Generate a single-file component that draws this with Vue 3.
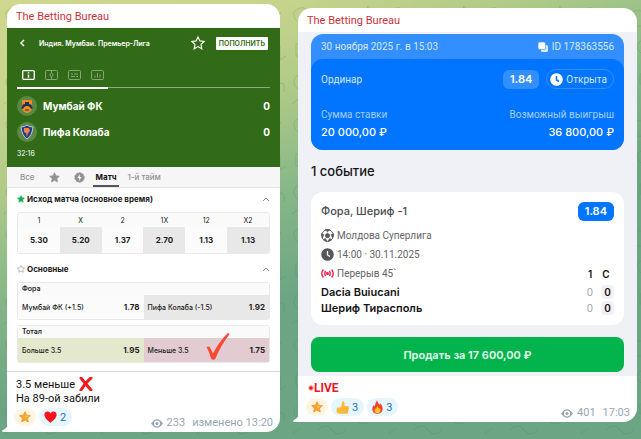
<script setup>
import { ref } from "vue";

const teams = [
  { name: "Мумбай ФК", score: 0, crest: "shield" },
  { name: "Пифа Колаба", score: 0, crest: "lion" }
];

const outcomes = [
  { label: "1", odd: "5.30" },
  { label: "X", odd: "5.20" },
  { label: "2", odd: "1.37" },
  { label: "1X", odd: "2.70" },
  { label: "12", odd: "1.13" },
  { label: "X2", odd: "1.13" }
];

const markets = [
  {
    title: "Фора",
    picks: [
      { label: "Мумбай ФК (+1.5)", odd: "1.78", tone: "light" },
      { label: "Пифа Колаба (-1.5)", odd: "1.92", tone: "grey" }
    ]
  },
  {
    title: "Тотал",
    picks: [
      { label: "Больше 3.5", odd: "1.95", tone: "lime" },
      { label: "Меньше 3.5", odd: "1.75", tone: "pink", checked: true }
    ]
  }
];

const scoreRows = [
  { name: "Dacia Buiucani", first: 0, total: 0 },
  { name: "Шериф Тирасполь", first: 0, total: 0 }
];

const activeTab = ref("match");
const starPath = "M8 1l2.1 4.6 5 .6-3.7 3.4 1 5L8 12.1l-4.4 2.5 1-5L.9 6.2l5-.6z";
</script>

<template>
  <main class="chat">
    <svg class="chat__doodles" aria-hidden="true">
      <defs>
        <pattern id="doodles" width="96" height="110" patternUnits="userSpaceOnUse">
          <g fill="none" stroke="#3f7f55" stroke-width="1">
            <path d="M6 12c8-9 18-2 13 6s-14 4-13-6zM30 8l12 5-9 8zM52 18c4-10 16-10 18 0s-12 12-18 0zM80 6l3 6 6 1-5 4 2 6-6-3-6 3 2-6-4-4 6-1z" />
            <path d="M8 44h14v12H8zM11 44v-4h8v4M36 38c8 2 8 14 0 16M44 36c10 4 10 20 0 22M66 40q6-6 12 0t-12 14q-10-8 0-14zM88 46v14l6-4" />
            <circle cx="14" cy="82" r="8" />
            <path d="M10 80h1M17 80h1M10 85q4 3 8 0M36 76l14 12M50 76l-8 14M64 74h16v10H64zM68 90q6 8 14 0M86 84q8-4 6 8M30 100q8-8 14 0t14 0M4 104l8-6" />
          </g>
        </pattern>
      </defs>
      <rect width="100%" height="100%" fill="url(#doodles)" />
    </svg>

    <article class="bubble">
      <h2 class="bubble__author">The Betting Bureau</h2>

      <section class="match">
        <div class="match__nav">
          <button class="plain" aria-label="Назад">
            <svg width="6" height="8" viewBox="0 0 6 8"><path d="M5 1L2 4l3 3" fill="none" stroke="#fff" stroke-width="1.5" /></svg>
          </button>
          <h3 class="match__league">Индия. Мумбаи. Премьер-Лига</h3>
          <button class="plain" aria-label="В избранное">
            <svg width="14" height="14" viewBox="0 0 16 16"><path :d="starPath" fill="none" stroke="#fff" stroke-width="1.3" /></svg>
          </button>
          <button class="match__deposit">ПОПОЛНИТЬ</button>
        </div>

        <div class="match__views">
          <button class="plain" aria-label="Инфо">
            <svg width="13" height="10" viewBox="0 0 13 10" fill="none" stroke="#fff"><rect x=".7" y=".7" width="11.6" height="8.6" rx="1" stroke-width="1.3" /><path d="M6.5 2.2v1.3M6.5 4.5v3.3" stroke-width="1.5" /></svg>
          </button>
          <button class="plain dim" aria-label="Поле">
            <svg width="13" height="10" viewBox="0 0 13 10" fill="none" stroke="#fff"><rect x=".5" y=".5" width="12" height="9" rx="1" /><circle cx="6.5" cy="5" r="1.5" /><path d="M6.5 1v2M6.5 7v2" /></svg>
          </button>
          <button class="plain dim" aria-label="События">
            <svg width="13" height="10" viewBox="0 0 13 10" fill="none" stroke="#fff"><rect x=".5" y=".5" width="12" height="9" rx="1" /><path d="M3 4h2M6 4h4M3 6.5h4M8 6.5h2" /></svg>
          </button>
          <button class="plain dim" aria-label="Статистика">
            <svg width="13" height="10" viewBox="0 0 13 10" fill="none" stroke="#fff"><rect x=".5" y=".5" width="12" height="9" rx="1" /><path d="M4 5.5v2M6.5 3v4.5M9 4.5v3" /></svg>
          </button>
        </div>
        <div class="match__bar"><span></span></div>

        <div v-for="team in teams" :key="team.name" class="team">
          <svg width="20" height="20" viewBox="0 0 20 20">
            <circle cx="10" cy="10" r="10" fill="#5b8845" />
            <g v-if="team.crest === 'shield'">
              <path d="M5 4h10v9q-1 3-5 4-4-1-5-4z" fill="#f18b20" />
              <path d="M5 11q0-3 3-3V6h4v2q3 0 3 3l1 1-2 1q-1-3-4-3t-4 3l-2-1z" fill="#1b315f" />
              <path d="M8 13h4v2H8z" fill="#8a6236" />
            </g>
            <g v-else>
              <path d="M4 5q4 0 6-2 2 2 6 2-1 9-6 12Q5 14 4 5z" fill="#253b83" stroke="#c2c9d9" />
              <path d="M7 6h5l1 3-2 2-1 4-1-4-2-1z" fill="#ed8350" />
            </g>
          </svg>
          <strong>{{ team.name }}</strong>
          <strong class="team__score">{{ team.score }}</strong>
        </div>
        <time class="match__time">32:16</time>
      </section>

      <nav class="tabs">
        <button class="tab" :class="{ 'tab--on': activeTab === 'all' }" @click="activeTab = 'all'">Все</button>
        <button class="tab" aria-label="Избранное">
          <svg width="11" height="11" viewBox="0 0 16 16"><path :d="starPath" fill="#929292" stroke="#929292" /></svg>
        </button>
        <button class="tab" aria-label="Быстрые">
          <svg width="11" height="11" viewBox="0 0 11 11"><circle cx="5.5" cy="5.5" r="4.7" fill="#929292" stroke="#929292" stroke-dasharray="2 1" /><path d="M6 2L3.5 6h1.8L5 9l2.5-4H5.7z" fill="#fff" /></svg>
        </button>
        <button class="tab" :class="{ 'tab--on': activeTab === 'match' }" @click="activeTab = 'match'">Матч</button>
        <button class="tab" :class="{ 'tab--on': activeTab === 'half' }" @click="activeTab = 'half'">1-й тайм</button>
      </nav>

      <section class="odds">
        <h4 class="odds__title">
          <svg width="8" height="8" viewBox="0 0 16 16"><path :d="starPath" fill="#0bb34c" stroke="#0bb34c" /></svg>
          Исход матча (основное время)
          <svg class="odds__arrow" width="8" height="5" viewBox="0 0 8 5"><path d="M1 4l3-3 3 3" fill="none" stroke="#8c8c8c" /></svg>
        </h4>
        <table class="outcomes">
          <thead>
            <tr><th v-for="item in outcomes" :key="item.label">{{ item.label }}</th></tr>
          </thead>
          <tbody>
            <tr><td v-for="item in outcomes" :key="item.label">{{ item.odd }}</td></tr>
          </tbody>
        </table>

        <h4 class="odds__title">
          <svg width="8" height="8" viewBox="0 0 16 16"><path :d="starPath" fill="none" stroke="#a5a5a5" stroke-width="1.5" /></svg>
          Основные
          <svg class="odds__arrow" width="8" height="5" viewBox="0 0 8 5"><path d="M1 4l3-3 3 3" fill="none" stroke="#8c8c8c" /></svg>
        </h4>
        <div v-for="market in markets" :key="market.title" class="market">
          <h5 class="market__title">{{ market.title }}</h5>
          <div class="market__row">
            <button v-for="pick in market.picks" :key="pick.label" class="pick" :class="`pick--${pick.tone}`">
              <span>{{ pick.label }}</span>
              <b>{{ pick.odd }}</b>
              <svg v-if="pick.checked" class="pick__check" width="26" height="29" viewBox="0 0 26 29"><path d="M1.500 15l3-.5L8 21.500Q14 10 23 .8l1.500 1.400Q16 13 10.500 26.500q-2 2.500-4.500 0Q4.500 20 1.500 15z" fill="#fb4934" /></svg>
            </button>
          </div>
        </div>
      </section>

      <footer class="caption caption--line">
        <p class="caption__text">
          3.5 меньше
          <svg width="14" height="14" viewBox="0 0 14 14"><path d="M2 1q3 4 10 12M12 1Q7 5 2 13" fill="none" stroke="#f11b22" stroke-width="3" stroke-linecap="round" /></svg>
        </p>
        <p class="caption__text">На 89-ой забили</p>
        <div class="caption__row">
          <button class="react react--star" aria-label="Звезда">
            <svg width="12" height="12" viewBox="0 0 16 16"><path :d="starPath" fill="#f9a72b" stroke="#f08c23" /><path d="M8 3l1 4 4 0-4 2z" fill="#ffd95c" /></svg>
          </button>
          <button class="react">
            <svg width="13" height="12" viewBox="0 0 13 12"><path d="M6.5 11.8C4 9.5.4 7 .4 3.7.4.4 4.6-.8 6.5 2.3 8.4-.8 12.6.4 12.6 3.7c0 3.3-3.6 5.8-6.1 8.1z" fill="#f5141c" /></svg>
            2
          </button>
          <div class="meta">
            <svg width="12" height="9" viewBox="0 0 12 9"><path d="M0 4.5Q6-4 12 4.5 6 13 0 4.5z" fill="#98a4ae" /><circle cx="6" cy="4.5" r="2.3" fill="#98a4ae" stroke="#fff" stroke-width="1.4" /></svg>
            <span>233</span>
            <span class="meta__time">изменено 13:20</span>
          </div>
        </div>
      </footer>
      <svg class="bubble__tail" width="6" height="8" viewBox="0 0 6 8"><path d="M6 0v8H1q-2-1 0-2 4-2 5-6z" fill="#fff" /></svg>
    </article>

    <article class="bubble bubble--second">
      <h2 class="bubble__author">The Betting Bureau</h2>

      <section class="slip">
        <div class="ticket">
          <div class="ticket__top">
            <span>30 ноября 2025 г. в 15:03</span>
            <span class="ticket__id">
              <svg width="10" height="10" viewBox="0 0 10 10"><rect x="3" y="3" width="7" height="7" rx="1.5" fill="#d9eaff" /><rect x="0" y="0" width="7.5" height="7.5" rx="1.5" fill="#fff" stroke="#338fff" stroke-width=".6" /></svg>
              ID 178363556
            </span>
          </div>
          <div class="ticket__body">
            <div class="ticket__line">
              <span class="ticket__kind">Ординар</span>
              <span class="odd odd--pale">1.84</span>
              <span class="status">
                <svg width="13" height="13" viewBox="0 0 13 13"><circle cx="6.5" cy="6.5" r="6.3" fill="#fff" /><path d="M6.5 3v4l2.5 1.5" fill="none" stroke="#0175ff" stroke-width="1.5" /></svg>
                Открыта
              </span>
            </div>
            <dl class="sums">
              <div><dt>Сумма ставки</dt><dd>20 000,00 ₽</dd></div>
              <div><dt>Возможный выигрыш</dt><dd>36 800,00 ₽</dd></div>
            </dl>
          </div>
        </div>

        <h3 class="slip__title">1 событие</h3>

        <div class="event">
          <div class="event__head">
            <h4>Фора, Шериф -1</h4>
            <span class="odd">1.84</span>
          </div>
          <p class="event__info">
            <svg width="13" height="13" viewBox="0 0 13 13"><circle cx="6.5" cy="6.5" r="5.8" fill="#fff" stroke="#57575b" /><path d="M6.5 4.2l2.2 1.6-.8 2.600H5.100l-.8-2.600zM4.200.7h4.600L6.500 2.700zM.4 4.800l2.300.8L1.500 8.800zM12.600 4.800l-2.300.8 1.200 3.200zM2.500 10.800l1.800-1.300 1.500 3zM10.500 10.800L8.700 9.500l-1.500 3z" fill="#57575b" stroke="#57575b" stroke-width=".8" /></svg>
            Молдова Суперлига
          </p>
          <p class="event__info">
            <svg width="13" height="13" viewBox="0 0 13 13"><circle cx="6.5" cy="6.5" r="6.3" fill="#57575b" /><path d="M6.5 3v4l2.5 1.5" fill="none" stroke="#fff" stroke-width="1.3" /></svg>
            14:00 · 30.11.2025
          </p>
          <table class="scores">
            <thead>
              <tr>
                <th class="scores__state">
                  <span class="event__info">
                    <svg width="13" height="9" viewBox="0 0 13 9" fill="none" stroke="#ec2450" stroke-width="1.4"><path d="M2.3.5q-3 4 0 8M4.6 2q-1.600 2.5 0 5M10.7.5q3 4 0 8M8.4 2q1.6 2.5 0 5" /><circle cx="6.5" cy="4.5" r=".9" fill="#ec2450" /></svg>
                    Перерыв 45`
                  </span>
                </th>
                <th>1</th>
                <th>С</th>
              </tr>
            </thead>
            <tbody>
              <tr v-for="row in scoreRows" :key="row.name">
                <th class="scores__name" scope="row">{{ row.name }}</th>
                <td class="scores__first">{{ row.first }}</td>
                <td><span class="scores__total">{{ row.total }}</span></td>
              </tr>
            </tbody>
          </table>
        </div>

        <button class="sell">Продать за 17 600,00 ₽</button>
      </section>

      <footer class="caption">
        <p class="live">
          <svg width="6" height="6" viewBox="0 0 6 6"><circle cx="3" cy="3" r="2.9" fill="#fbb" /><circle cx="3" cy="3" r="1.8" fill="#f0141e" /></svg>
          LIVE
        </p>
        <div class="caption__row">
          <button class="react react--star" aria-label="Звезда">
            <svg width="12" height="12" viewBox="0 0 16 16"><path :d="starPath" fill="#f9a72b" stroke="#f08c23" /><path d="M8 3l1 4 4 0-4 2z" fill="#ffd95c" /></svg>
          </button>
          <button class="react">
            <svg width="13" height="13" viewBox="0 0 13 13"><path d="M1 6.5h3Q6 5 6 1.5 6 .3 7 .3q2 0 1.5 4.7H12q1 .2.8 1.5L12 11.5q-.3 1.3-1.5 1.3H4q-2.5 0-3.3-1.5Q.2 9 1 6.5z" fill="#fdbb3c" /><path d="M9.5 7.2h3M9.3 9.2h3M9 11.1h2.7" stroke="#ef9c2c" stroke-width=".6" /></svg>
            3
          </button>
          <button class="react">
            <svg width="11" height="14" viewBox="0 0 11 14"><path d="M5 .3Q5.5 3 8 5q.5-1 .3-2Q11 6 10.7 9q-.3 4.7-5.2 4.7T.3 9.2Q.2 6.5 2 5q.2 1 .8 1.5Q3 3 5 .3z" fill="#f4432c" /><path d="M5.7 6Q6 8 7.3 8.8l.6-1q2 5.4-2.4 5.5-4.4-.3-2.4-5 .5 1 1 1Q4.3 7.5 5.7 6z" fill="#ffc928" /></svg>
            3
          </button>
          <div class="meta">
            <svg width="12" height="9" viewBox="0 0 12 9"><path d="M0 4.5Q6-4 12 4.5 6 13 0 4.5z" fill="#98a4ae" /><circle cx="6" cy="4.5" r="2.3" fill="#98a4ae" stroke="#fff" stroke-width="1.4" /></svg>
            <span>401</span>
            <span class="meta__time">17:03</span>
          </div>
        </div>
      </footer>
      <svg class="bubble__tail" width="6" height="8" viewBox="0 0 6 8"><path d="M6 0v8H1q-2-1 0-2 4-2 5-6z" fill="#fff" /></svg>
    </article>
  </main>
</template>

<style>
body {
  margin: 0;
  background: #6ca583;
}
</style>

<style scoped>
* {
  box-sizing: border-box;
}

h2,
h3,
h4,
h5,
p,
dl,
dd {
  margin: 0;
}

button {
  font: inherit;
  color: inherit;
  border: 0;
  padding: 0;
  background: none;
  cursor: pointer;
}

svg {
  flex: none;
  display: block;
}

.chat {
  position: relative;
  min-height: 100vh;
  padding: 4px 4px 7px 7px;
  display: grid;
  grid-template-columns: 273fr 339fr;
  gap: 18px;
  align-items: start;
  background: linear-gradient(160deg, #d0d78e 0%, #c8d48c 15%, #b0cb87 28%, #86b787 44%, #6ca583 60%);
  font-family: Roboto, "Noto Sans", sans-serif;
}

.chat__doodles {
  position: absolute;
  inset: 0;
  width: 100%;
  height: 100%;
  opacity: 0.22;
}

.bubble {
  position: relative;
  min-width: 0;
  background: #fff;
  border-radius: 14px 14px 14px 0;
}

.bubble--second {
  margin-top: 4px;
}

.bubble__author {
  padding: 4px 9px 0;
  height: 24px;
  line-height: 18px;
  font-size: 11px;
  font-weight: 400;
  color: #c8323c;
}

.bubble__tail {
  position: absolute;
  left: -5px;
  bottom: 0;
}

/* match header */
.match {
  padding: 6px 10px 0;
  height: 139px;
  background: #326b17;
  color: #fff;
}

.match,
.tabs,
.odds {
  font-family: Inter, "Noto Sans", sans-serif;
}

.match__nav {
  display: flex;
  align-items: center;
  height: 18px;
  padding: 0 2px;
}

.match__league {
  flex: 1;
  padding-left: 14px;
  font-size: 7px;
  font-weight: 600;
}

.match__deposit {
  margin-left: 11px;
  padding: 0 3px;
  height: 13px;
  line-height: 13px;
  border-radius: 1px;
  background: #fff;
  color: #326b17;
  font-size: 7px;
  font-weight: 600;
}

.match__views {
  display: flex;
  align-items: flex-start;
  gap: 10px;
  padding: 18px 5px 0;
  height: 35px;
}

.dim {
  opacity: 0.4;
}

.match__bar {
  height: 1px;
  background: #8aaa7b;
  margin-bottom: 5px;
}

.match__bar span {
  display: block;
  width: 36%;
  height: 2px;
  background: #fff;
}

.team {
  display: flex;
  align-items: center;
  gap: 6px;
  height: 26px;
  font-size: 10px;
}

.team__score {
  margin-left: auto;
}

.match__time {
  display: block;
  padding-top: 4px;
  font-size: 7px;
  line-height: 10px;
}

.tabs {
  display: flex;
  align-items: stretch;
  gap: 14px;
  height: 21px;
  padding: 0 13px;
  background: #f6f6f6;
  border-bottom: 1px solid #e6e6e6;
  font-size: 8px;
  font-weight: 500;
  color: #929292;
}

.tab--on {
  margin: 0 -6px;
  padding: 2px 3px 0;
  font-weight: 700;
  color: #111;
  border-bottom: 2px solid #55555a;
}

/* odds tables */
.odds {
  padding: 0 10px 8px;
  color: #1c1c1c;
}

.odds__title {
  display: flex;
  align-items: center;
  gap: 2px;
  height: 24px;
  padding-bottom: 2px;
  font-size: 8px;
  font-weight: 700;
}

.odds__arrow {
  margin-left: auto;
}

.outcomes {
  width: 100%;
  margin-bottom: 4px;
  table-layout: fixed;
  border-spacing: 0;
  border: 1px solid #e9e9e9;
  border-radius: 3px;
  overflow: hidden;
  text-align: center;
  font-size: 8px;
  line-height: 13px;
}

.outcomes th {
  padding: 0;
  height: 14px;
  font-size: 7px;
  font-weight: 400;
  background: #fafafa;
}

.outcomes td {
  padding: 0;
  height: 26px;
  font-weight: 700;
  background: #fbfbfb;
}

.outcomes td:nth-child(even) {
  background: #e8e8e8;
}

.market {
  border: 1px solid #e9e9e9;
  border-radius: 3px;
}

.market + .market {
  margin-top: 5px;
}

.market__title {
  padding: 0 4px;
  height: 12px;
  line-height: 12px;
  font-size: 7px;
  font-weight: 600;
  background: #fafafa;
}

.market__row {
  display: grid;
  grid-template-columns: 1fr 1fr;
}

.pick {
  position: relative;
  display: flex;
  align-items: center;
  justify-content: space-between;
  height: 24px;
  padding: 0 4px;
  font-size: 7px;
  font-weight: 500;
  white-space: nowrap;
}

.pick b {
  font-size: 8px;
  font-weight: 700;
}

.pick--light {
  background: #fbfbfb;
}

.pick--grey {
  background: #e8e8e8;
}

.pick--lime {
  background: #e4e8cd;
}

.pick--pink {
  background: #e2cbd1;
}

.pick__check {
  position: absolute;
  right: 38px;
  bottom: 1px;
}

/* message text and reactions */
.caption {
  padding: 5px 7px 3px 8px;
}

.caption--line {
  padding-left: 7px;
  border-top: 1px solid #dcdcdc;
}

.caption__text {
  display: flex;
  align-items: center;
  gap: 4px;
  padding-left: 2px;
  height: 14px;
  font-size: 11px;
  color: #111;
}

.caption__row {
  display: flex;
  align-items: flex-start;
  gap: 3px;
  padding-top: 3px;
}

.react {
  display: flex;
  align-items: center;
  gap: 3px;
  height: 18px;
  padding: 0 6px 0 5px;
  border-radius: 9px;
  background: #e7f5fe;
  color: #1c71c3;
  font-size: 11px;
}

.react--star {
  padding: 0 5px;
  background: #fef5e0;
}

.meta {
  display: flex;
  align-items: center;
  gap: 4px;
  margin-left: auto;
  padding-top: 9px;
  line-height: 12px;
  font-size: 11px;
  color: #98a6b2;
}

.meta__time {
  margin-left: 3px;
}

/* bet slip */
.slip {
  padding: 2px 13px 4px;
  background: #f0f1f6;
}

.ticket {
  border-radius: 12px;
  background: #338fff;
  color: #d5e8ff;
  font-size: 10px;
}

.ticket__top {
  display: flex;
  align-items: center;
  justify-content: space-between;
  height: 25px;
  padding: 0 10px;
}

.ticket__id {
  display: flex;
  align-items: center;
  gap: 4px;
}

.ticket__body {
  padding: 10px 10px 9px;
  border-radius: 12px;
  background: #0175ff;
}

.ticket__line {
  display: flex;
  align-items: center;
  gap: 7px;
  height: 20px;
}

.ticket__kind {
  flex: 1;
}

.odd {
  padding: 0 7px;
  height: 19px;
  line-height: 19px;
  border-radius: 6px;
  background: #0175ff;
  color: #fff;
  font-size: 11px;
  font-weight: 600;
}

.odd,
.sums dd,
.slip__title,
.event__head h4,
.scores,
.sell {
  font-family: Inter, "Noto Sans", sans-serif;
}

.odd--pale {
  background: #338fff;
}

.status {
  display: flex;
  align-items: center;
  gap: 3px;
  height: 20px;
  padding: 0 6px 0 3px;
  border: 1px solid #338fff;
  border-radius: 10px;
}

.sums {
  display: flex;
  justify-content: space-between;
  padding-top: 18px;
}

.sums div:last-child {
  text-align: right;
}

.sums dt {
  line-height: 16px;
  color: #a5cfff;
}

.sums dd {
  line-height: 18px;
  font-size: 11px;
  font-weight: 500;
  color: #fff;
}

.slip__title {
  padding: 13px 0 12px;
  line-height: 17px;
  font-size: 13px;
  font-weight: 500;
  color: #151517;
}

.event {
  padding: 8px 10px 9px;
  border-radius: 12px;
  background: #fff;
  color: #151517;
}

.event__head {
  display: flex;
  align-items: center;
  justify-content: space-between;
  height: 22px;
  margin-bottom: 4px;
}

.event__head h4 {
  font-size: 11px;
  font-weight: 500;
  color: #4c4c50;
}

.event__info {
  display: flex;
  align-items: center;
  gap: 3px;
  height: 19px;
  font-family: Roboto, "Noto Sans", sans-serif;
  font-size: 10px;
  font-weight: 400;
  color: #646468;
}

.scores {
  width: 100%;
  border-spacing: 0;
  font-size: 10px;
}

.scores th,
.scores td {
  padding: 0;
  width: 16px;
  text-align: center;
  font-weight: 600;
}

.scores thead th {
  height: 20px;
}

.scores td {
  height: 16px;
}

.scores .scores__state,
.scores .scores__name {
  width: auto;
  text-align: left;
}

.scores .scores__state {
  vertical-align: top;
}

.scores .scores__name {
  font-size: 11px;
}

.scores .scores__first {
  color: #a0a0a5;
  font-weight: 400;
}

.scores__total {
  display: block;
  margin-left: 3px;
  height: 14px;
  line-height: 14px;
  border-radius: 4px;
  background: #f2f2f6;
}

.sell {
  display: block;
  width: 100%;
  height: 35px;
  margin-top: 12px;
  border-radius: 8px;
  background: #03b34c;
  color: #e8fff0;
  font-size: 11px;
  font-weight: 600;
}

.live {
  display: flex;
  align-items: center;
  height: 14px;
  padding-left: 2px;
  font-size: 12px;
  font-weight: 700;
  color: #f0141e;
}
</style>
